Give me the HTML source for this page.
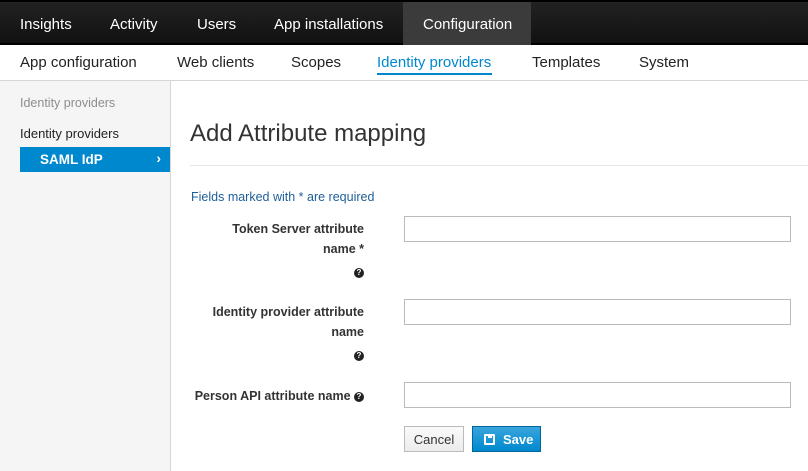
<!DOCTYPE html>
<html><head><meta charset="utf-8"><style>
*{margin:0;padding:0;box-sizing:border-box}
body{width:808px;height:471px;overflow:hidden;font-family:"Liberation Sans",sans-serif;background:#fff;position:relative;color:#333}
.top{position:absolute;left:0;top:0;width:808px;height:45px;background:linear-gradient(#222,#111);border-top:2px solid #000;border-bottom:2px solid #000}
.top span{position:absolute;top:14px;color:#fff;font-size:15px}
.act{position:absolute;left:403px;top:0;width:128px;height:43px;background:#3b3b3b}
.sub{position:absolute;left:0;top:45px;width:808px;height:36px;background:#fff;border-bottom:1px solid #d6d6d6}
.sub span{position:absolute;top:9px;font-size:15px;color:#222}
.side{position:absolute;left:0;top:81px;width:171px;height:390px;background:#f5f5f5;border-right:1px solid #d6d6d6}
.a{position:absolute;font-size:13px}
.lbl{position:absolute;font-size:12.5px;color:#333;text-align:right;font-weight:bold;width:180px;line-height:20px}
.q{display:inline-block;width:10px;height:10px;border-radius:50%;background:#222;color:#fff;font-size:8px;line-height:10px;text-align:center;font-weight:bold;vertical-align:middle}
.inp{position:absolute;left:404px;width:387px;height:26px;border:1px solid #bbb;background:#fff}
</style></head><body>
<div class="top"><div class="act"></div>
<span style="left:20px">Insights</span><span style="left:110px">Activity</span><span style="left:197px">Users</span><span style="left:274px">App installations</span><span style="left:423px">Configuration</span></div>
<div class="sub">
<span style="left:20px">App configuration</span><span style="left:177px">Web clients</span><span style="left:291px">Scopes</span>
<span style="left:377px;color:#0088ce">Identity providers</span>
<div style="position:absolute;left:377px;top:28px;width:115px;height:2px;background:#0088ce"></div>
<span style="left:532px">Templates</span><span style="left:639px">System</span></div>
<div class="side">
<div class="a" style="left:20px;top:15px;color:#8b8d8f;font-size:12.5px">Identity providers</div>
<div class="a" style="left:20px;top:45px;color:#222">Identity providers</div>
<div style="position:absolute;left:20px;top:66px;width:150px;height:25px;background:#0088ce;color:#fff;font-size:13.5px;font-weight:bold;padding:5px 0 0 20px">SAML IdP<span style="position:absolute;right:9px;top:4px">›</span></div>
</div>
<div class="a" style="left:190px;top:120px;font-size:24px;color:#333">Add Attribute mapping</div>
<div style="position:absolute;left:190px;top:165px;width:618px;height:1px;background:#e5e5e5"></div>
<div class="a" style="left:191px;top:190px;font-size:12.5px;color:#1f5f99">Fields marked with * are required</div>
<div class="lbl" style="left:184px;top:219px">Token Server attribute<br>name *<br><span style="line-height:26px"><span class="q">?</span></span></div>
<div class="inp" style="top:216px"></div>
<div class="lbl" style="left:184px;top:302px">Identity provider attribute<br>name<br><span style="line-height:26px"><span class="q">?</span></span></div>
<div class="inp" style="top:299px"></div>
<div class="lbl" style="left:184px;top:386px;width:180px">Person API attribute name <span class="q">?</span></div>
<div class="inp" style="top:382px"></div>
<div style="position:absolute;left:404px;top:426px;width:60px;height:26px;border:1px solid #bbb;background:linear-gradient(#fafafa,#ececec);font-size:13px;text-align:center;line-height:25px;color:#333">Cancel</div>
<div style="position:absolute;left:472px;top:426px;width:69px;height:26px;border:1px solid #00659c;background:linear-gradient(#39a5dc,#0088ce);font-size:13px;font-weight:bold;color:#fff;line-height:25px;padding-left:30px">Save
<div style="position:absolute;left:11px;top:7px;width:11px;height:11px;border:2px solid #fff;border-radius:1px"><div style="position:absolute;left:2px;top:-1px;width:4px;height:3px;background:#fff"></div></div></div>
</body></html>
